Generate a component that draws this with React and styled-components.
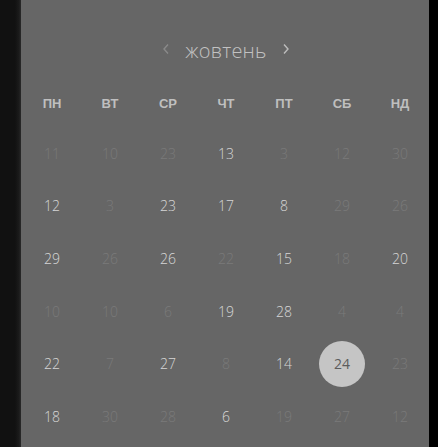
import React from "react";
import styled, { createGlobalStyle } from "styled-components";

const Global = createGlobalStyle`
  html, body { margin: 0; padding: 0; background: #000; }
  body { font-family: "Open Sans", "Noto Sans", sans-serif; }
`;

const Page = styled.div`
  display: flex;
  width: 438px;
  height: 447px;
  overflow: hidden;
  background: #000;
`;

const Side = styled.div`
  width: 21px;
  flex: none;
  background: linear-gradient(90deg, #111 0, #111 15px, #1b1b1b 19px, #2a2a2a 21px);
`;

const Panel = styled.div`
  width: 408px;
  flex: none;
  background: #666;
  padding: 30px 0 0 2px;
  box-sizing: border-box;
`;

const Nav = styled.div`
  height: 40px;
  display: flex;
  align-items: center;
  justify-content: center;
  gap: 15px;
  margin-bottom: 9px;
`;

const Chevron = styled.svg`
  width: 8px;
  height: 12px;
  margin-top: -3px;
  color: ${(p) => (p.$dim ? "#8a8a8a" : "#bdbdbd")};
`;

const Month = styled.span`
  font-family: "Open Sans", "Noto Sans", sans-serif;
  font-weight: 300;
  font-size: 20px;
  color: #c2c2c2;
  letter-spacing: 0.2px;
`;

const Grid = styled.div`
  display: grid;
  grid-template-columns: repeat(7, 58px);
`;

const Weekday = styled.div`
  height: 48px;
  display: flex;
  align-items: center;
  justify-content: center;
  font-family: "Liberation Sans", Arial, sans-serif;
  font-weight: 700;
  font-size: 13px;
  color: #bfbfbf;
`;

const Cell = styled.div`
  height: 52.6px;
  display: flex;
  align-items: center;
  justify-content: center;
`;

const Day = styled.span`
  width: 46px;
  height: 46px;
  border-radius: 50%;
  display: flex;
  align-items: center;
  justify-content: center;
  font-family: "Open Sans", "Noto Sans", sans-serif;
  font-weight: ${(p) => (p.$sel ? 400 : 300)};
  font-size: 14px;
  color: ${(p) => (p.$sel ? "#5c5c5c" : p.$on ? "#d6d6d6" : "#7a7a7a")};
  background: ${(p) => (p.$sel ? "#c5c5c5" : "transparent")};
`;

const days = ["ПН", "ВТ", "СР", "ЧТ", "ПТ", "СБ", "НД"];

const rows = [
  "11m 10m 23m 13a 3m 12m 30m",
  "12a 3m 23a 17a 8a 29m 26m",
  "29a 26m 26a 22m 15a 18m 20a",
  "10m 10m 6m 19a 28a 4m 4m",
  "22a 7m 27a 8m 14a 24s 23m",
  "18a 30m 28m 6a 19m 27m 12m",
];

export default function App() {
  return (
    <Page>
      <Global />
      <Side />
      <Panel>
        <Nav>
          <Chevron $dim viewBox="0 0 8 12">
            <path d="M6 1.5 L2 6 L6 10.5" fill="none" stroke="currentColor" strokeWidth="1.4" />
          </Chevron>
          <Month>жовтень</Month>
          <Chevron viewBox="0 0 8 12">
            <path d="M2 1.5 L6 6 L2 10.5" fill="none" stroke="currentColor" strokeWidth="1.4" />
          </Chevron>
        </Nav>
        <Grid>
          {days.map((d) => (
            <Weekday key={d}>{d}</Weekday>
          ))}
          {rows.flatMap((r, ri) =>
            r.split(" ").map((c, ci) => {
              const n = c.slice(0, -1);
              const t = c.slice(-1);
              return (
                <Cell key={ri + "-" + ci}>
                  <Day $on={t === "a"} $sel={t === "s"}>
                    {n}
                  </Day>
                </Cell>
              );
            })
          )}
        </Grid>
      </Panel>
    </Page>
  );
}
